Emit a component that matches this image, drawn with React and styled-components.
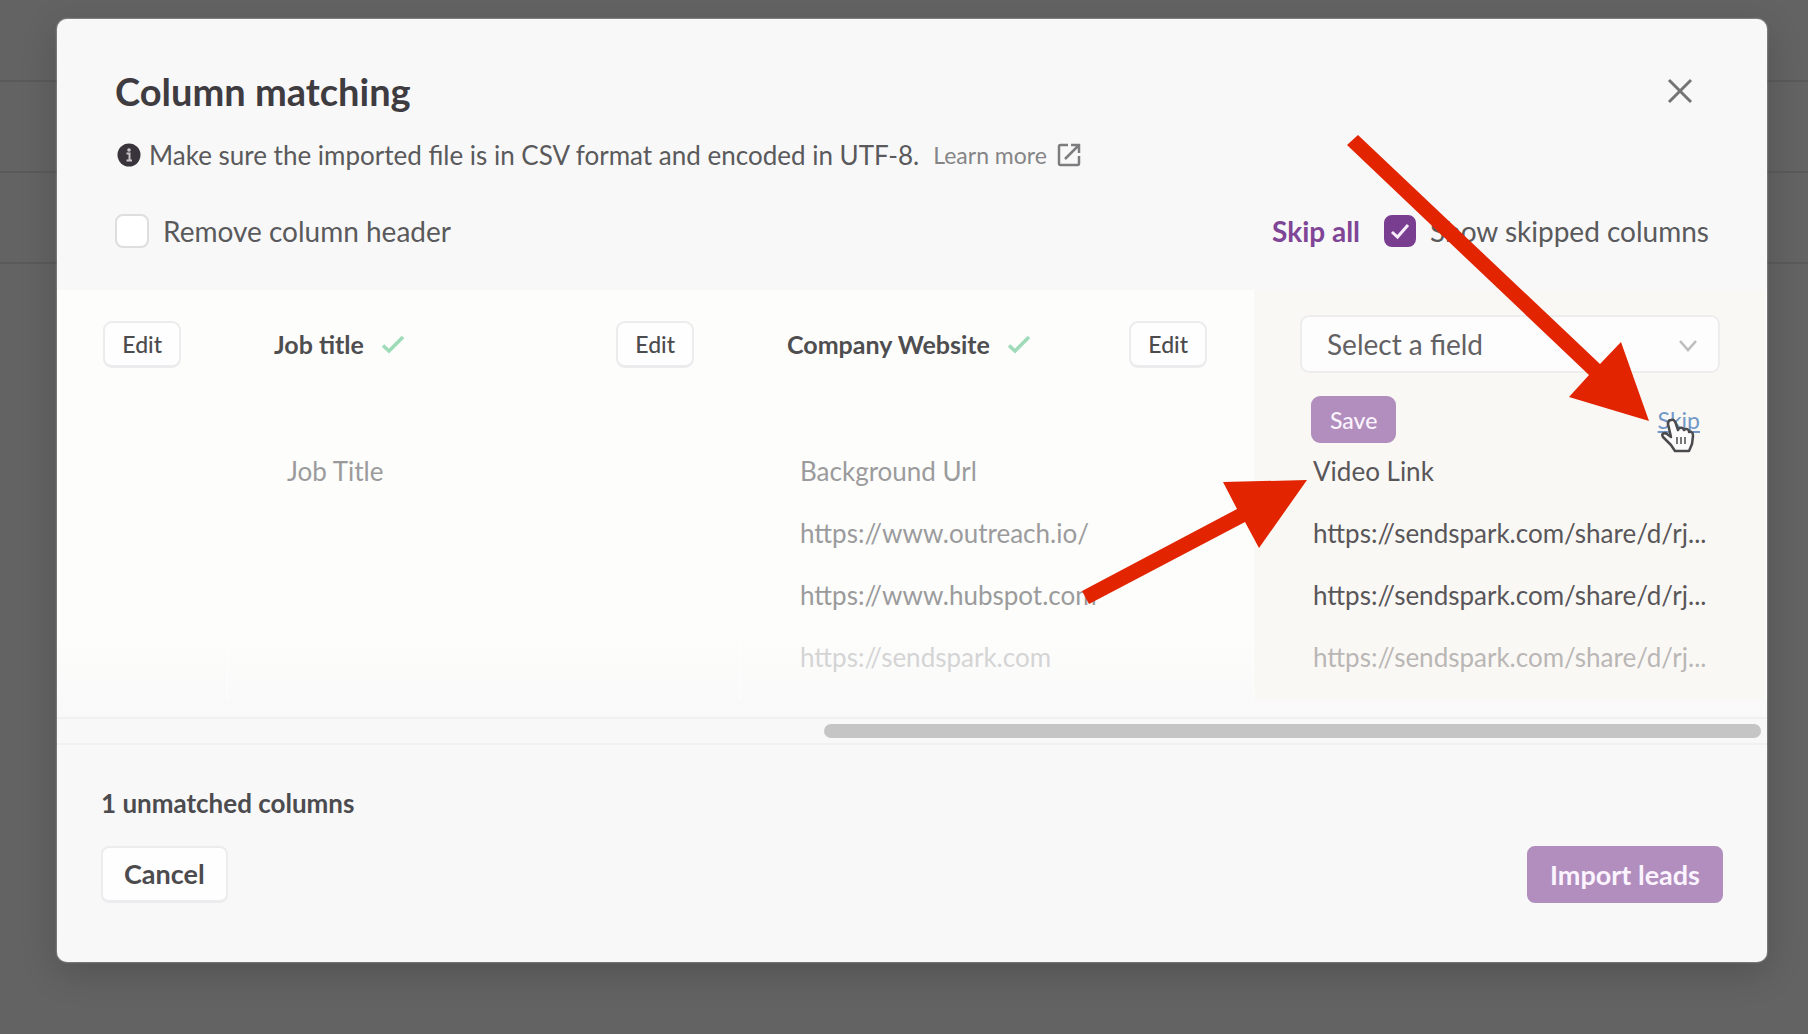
import styled, { createGlobalStyle } from "styled-components";

const GlobalStyle = createGlobalStyle`
  *, *::before, *::after {
    box-sizing: border-box;
  }
  body {
    margin: 0;
    background: #636363;
    color: #5a5a5c;
    font-family: Lato, "Liberation Sans", sans-serif;
    font-size: 28px;
    line-height: 32px;
  }
  button, input, select {
    font: inherit;
    color: inherit;
  }
`;

const Page = styled.div`
  position: relative;
  min-height: 100vh;
  padding: 19px 41px 71px 57px;
  overflow: hidden;
`;

/* the dimmed list behind the dialog */
const Behind = styled.div`
  position: absolute;
  inset: 0 0 auto;
  padding-top: 80px;
`;

const BehindRow = styled.div`
  height: 91px;
  border-top: 2px solid #5a5a5a;
`;

const Modal = styled.main`
  position: relative;
  border-radius: 10px;
  background: #f8f8f8;
  box-shadow: 0 10px 36px rgba(0, 0, 0, 0.18), 0 0 2px #ddd;
  overflow: hidden;
`;

const Header = styled.header`
  padding: 50px 58px 42px;
`;

const Bar = styled.div`
  display: flex;
  align-items: center;
  justify-content: space-between;
`;

const Title = styled.h1`
  margin: 0;
  color: #3f3c41;
  font-size: 38px;
  line-height: 44px;
`;

const CloseButton = styled.button`
  display: flex;
  padding: 4px;
  margin-right: 12px;
  border: 0;
  background: none;
`;

const Hint = styled.p`
  display: flex;
  align-items: center;
  margin: 26px 0 43px;
  font-size: 26px;

  svg {
    flex: none;
  }
`;

const HintText = styled.span`
  margin: 0 14px 0 8px;
`;

const LearnMore = styled.a`
  display: flex;
  align-items: center;
  gap: 10px;
  color: #858587;
  font-size: 23px;
  text-decoration: none;
`;

const Options = styled.div`
  display: flex;
  align-items: center;
  gap: 24px;
`;

const CheckLabel = styled.label`
  display: flex;
  align-items: center;
  gap: 14px;
`;

const CheckBox = styled.span`
  position: relative;
  display: flex;

  input {
    appearance: none;
    width: 34px;
    height: 34px;
    margin: 0;
    border: 2px solid #dededf;
    border-radius: 8px;
    background: #fff;
  }
  input:checked {
    width: 32px;
    height: 32px;
    border-color: #7a3e91;
    background: #7a3e91;
  }
  svg {
    position: absolute;
    inset: 0;
    pointer-events: none;
  }
`;

const TextButton = styled.button`
  padding: 0;
  border: 0;
  background: none;
  color: #7f4596;
  font-weight: 700;
`;

const Scroller = styled.div`
  padding-bottom: 18px;
  border-bottom: 2px solid #f0f0f0;
  background: linear-gradient(#fdfdfc 340px, #f9f9f9 420px);
  overflow: hidden;
`;

/* four columns of 30% each, scrolled all the way to the right */
const Columns = styled.table`
  width: 120%;
  margin-left: -20%;
  table-layout: fixed;
  border-collapse: separate;
  border-spacing: 0;
`;

const HeadCell = styled.th`
  padding: 25px 46px 0;
  border-right: 1px solid #fefefe;
  background: ${(p) => (p.$open ? "#faf8f4" : "transparent")};
  color: #4e4d50;
  font-size: 25px;
  text-align: left;
  vertical-align: top;
`;

const HeadLine = styled.div`
  display: flex;
  align-items: center;
  min-height: 58px;
  gap: 17px;
`;

const Cell = styled.td`
  height: ${(p) => (p.$last ? 70 : 62)}px;
  padding: 12px 40px 0 59px;
  border-right: 1px solid #fefefe;
  background: ${(p) => (p.$open ? "#faf8f4" : "transparent")};
  color: ${(p) => (p.$open ? "#59565a" : "#9b9b9c")};
  font-size: 26px;
  white-space: nowrap;
  vertical-align: top;

  span {
    opacity: ${(p) => (p.$last ? 0.4 : 1)};
  }
`;

const Button = styled.button`
  height: ${(p) => (p.$small ? 47 : 57)}px;
  padding: 0 ${(p) => (p.$small ? 17 : 21)}px;
  border: 2px solid ${(p) => (p.$primary ? "#b18ebd" : "#ececee")};
  border-bottom-width: ${(p) => (p.$primary ? 2 : 3)}px;
  border-radius: ${(p) => (p.$small ? 9 : 8)}px;
  background: ${(p) => (p.$primary ? "#b18ebd" : "#fefefe")};
  color: ${(p) => (p.$primary ? "#fbf3fd" : "#4c4b4e")};
  font-size: ${(p) => (p.$small ? 23 : 27)}px;
  font-weight: ${(p) => (p.$small ? 500 : 700)};
`;

const EditButton = styled(Button)`
  margin-left: auto;
`;

const SelectBox = styled.div`
  position: relative;
  flex: 1;

  select {
    appearance: none;
    display: block;
    width: 100%;
    height: 58px;
    padding: 0 25px;
    border: 2px solid #ededee;
    border-radius: 9px;
    background: #fdfdfd;
    color: #626163;
    font-size: 28px;
    font-weight: 400;
  }
  svg {
    position: absolute;
    top: 24px;
    right: 22px;
    pointer-events: none;
  }
`;

const Actions = styled(Bar)`
  margin-top: 23px;
  padding: 0 20px 0 11px;
`;

const SkipLink = styled.a`
  color: #7398c8;
  font-size: 23px;
  font-weight: 400;
`;

const Track = styled.div`
  padding: 5px 6px 5px 0;
  border-bottom: 2px solid #f1f1f1;
`;

const Thumb = styled.div`
  width: 55%;
  height: 14px;
  margin-left: auto;
  border-radius: 7px;
  background: #c5c5c5;
`;

const Footer = styled.footer`
  padding: 42px 44px 59px;
`;

const Unmatched = styled.p`
  margin: 0 0 27px;
  color: #4c4b4f;
  font-size: 26px;
  font-weight: 700;
`;

const Annotations = styled.svg`
  position: absolute;
  top: 0;
  left: 0;
  pointer-events: none;
`;

const GreenCheck = () => (
  <svg width="24" height="20" viewBox="0 0 24 20" fill="none">
    <path d="M2 11.5 8 17 22 3" stroke="#9edbb8" strokeWidth="3.5" />
  </svg>
);

const columns = [
  { rows: ["", "", "", ""] },
  { title: "Job title", rows: ["Job Title", "", "", ""] },
  {
    title: "Company Website",
    rows: [
      "Background Url",
      "https://www.outreach.io/",
      "https://www.hubspot.com",
      "https://sendspark.com",
    ],
  },
  {
    open: true,
    rows: [
      "Video Link",
      "https://sendspark.com/share/d/rj...",
      "https://sendspark.com/share/d/rj...",
      "https://sendspark.com/share/d/rj...",
    ],
  },
];

const OpenHead = () => (
  <>
    <HeadLine>
      <SelectBox>
        <select aria-label="Field">
          <option>Select a field</option>
        </select>
        <svg width="20" height="14" viewBox="0 0 20 14" fill="none">
          <path d="m2 2 8 9 8-9" stroke="#bdbdbf" strokeWidth="2.5" />
        </svg>
      </SelectBox>
    </HeadLine>
    <Actions>
      <Button $small $primary>
        Save
      </Button>
      <SkipLink href="#skip">Skip</SkipLink>
    </Actions>
  </>
);

const MatchedHead = ({ title }) => (
  <HeadLine>
    {title && (
      <>
        {title}
        <GreenCheck />
      </>
    )}
    <EditButton $small>Edit</EditButton>
  </HeadLine>
);

const App = () => (
  <Page>
    <GlobalStyle />
    <Behind>
      <BehindRow />
      <BehindRow />
      <BehindRow />
    </Behind>

    <Modal>
      <Header>
        <Bar>
          <Title>Column matching</Title>
          <CloseButton aria-label="Close">
            <svg width="26" height="26" viewBox="0 0 26 26" fill="none">
              <path d="m2 2 22 22M24 2 2 24" stroke="#747476" strokeWidth="3" />
            </svg>
          </CloseButton>
        </Bar>
        <Hint>
          <svg width="26" height="24" viewBox="0 0 26 24">
            <circle cx="14" cy="12" r="11.5" fill="#39343b" />
            <circle cx="14" cy="7" r="1.8" fill="#c9c6ca" />
            <path
              d="M11.5 10.500h3v7M11.500 17.500h5.500"
              fill="none"
              stroke="#c9c6ca"
              strokeWidth="2"
            />
          </svg>
          <HintText>
            Make sure the imported file is in CSV format and encoded in UTF-8.
          </HintText>
          <LearnMore href="#learn">
            Learn more
            <svg width="24" height="24" viewBox="0 0 24 24" fill="none">
              <path
                d="M11 2H3.500Q2 2 2 3.500V20.500Q2 22 3.500 22H20.500Q22 22 22 20.500V13M14 2h8v8M21 3 8 16"
                stroke="#7d7d80"
                strokeWidth="2.5"
              />
            </svg>
          </LearnMore>
        </Hint>
        <Bar>
          <CheckLabel>
            <CheckBox>
              <input type="checkbox" />
            </CheckBox>
            Remove column header
          </CheckLabel>
          <Options>
            <TextButton>Skip all</TextButton>
            <CheckLabel>
              <CheckBox>
                <input type="checkbox" defaultChecked />
                <svg width="32" height="32" viewBox="0 0 32 32" fill="none">
                  <path d="m8 17 5.500 5L24 10" stroke="#f6ecfa" strokeWidth="3" />
                </svg>
              </CheckBox>
              Show skipped columns
            </CheckLabel>
          </Options>
        </Bar>
      </Header>

      <Scroller>
        <Columns>
          <thead>
            <tr>
              {columns.map((col, i) => (
                <HeadCell key={i} $open={col.open}>
                  {col.open ? <OpenHead /> : <MatchedHead title={col.title} />}
                </HeadCell>
              ))}
            </tr>
          </thead>
          <tbody>
            {[0, 1, 2, 3].map((row) => (
              <tr key={row}>
                {columns.map((col, i) => (
                  <Cell key={i} $open={col.open} $last={row === 3}>
                    <span>{col.rows[row]}</span>
                  </Cell>
                ))}
              </tr>
            ))}
          </tbody>
        </Columns>
      </Scroller>
      <Track>
        <Thumb />
      </Track>

      <Footer>
        <Unmatched>1 unmatched columns</Unmatched>
        <Bar>
          <Button>Cancel</Button>
          <Button $primary>Import leads</Button>
        </Bar>
      </Footer>
    </Modal>

    <Annotations width="1808" height="1034" viewBox="0 0 1808 1034">
      {/* hand pointer */}
      <path
        d="M1671 420c3-1 4 1 5 4l2 6c1-3 5-3 6 0 2-2 5-1 5 2 3-1 4 1 4 4l-1 8-3 7h-14l-4-6-8-8c-2-3 1-5 4-3l4 3-3-13c0-2 1-4 3-4z"
        fill="#fbfbfb"
        stroke="#4b4b4e"
        strokeWidth="2.5"
        strokeLinejoin="round"
      />
      <path
        d="M1677 437v7M1681 437v7M1685 437v7"
        stroke="#77777a"
        strokeWidth="2"
      />
      <g fill="#e22400">
        <path d="M1358 135 1600 364 1621 342 1649 421 1569 397 1589 375 1347 145z" />
        <path d="M1082 591 1237 509 1223 482 1307 480 1259 548 1245 522 1089 604z" />
      </g>
    </Annotations>
  </Page>
);

export default App;
